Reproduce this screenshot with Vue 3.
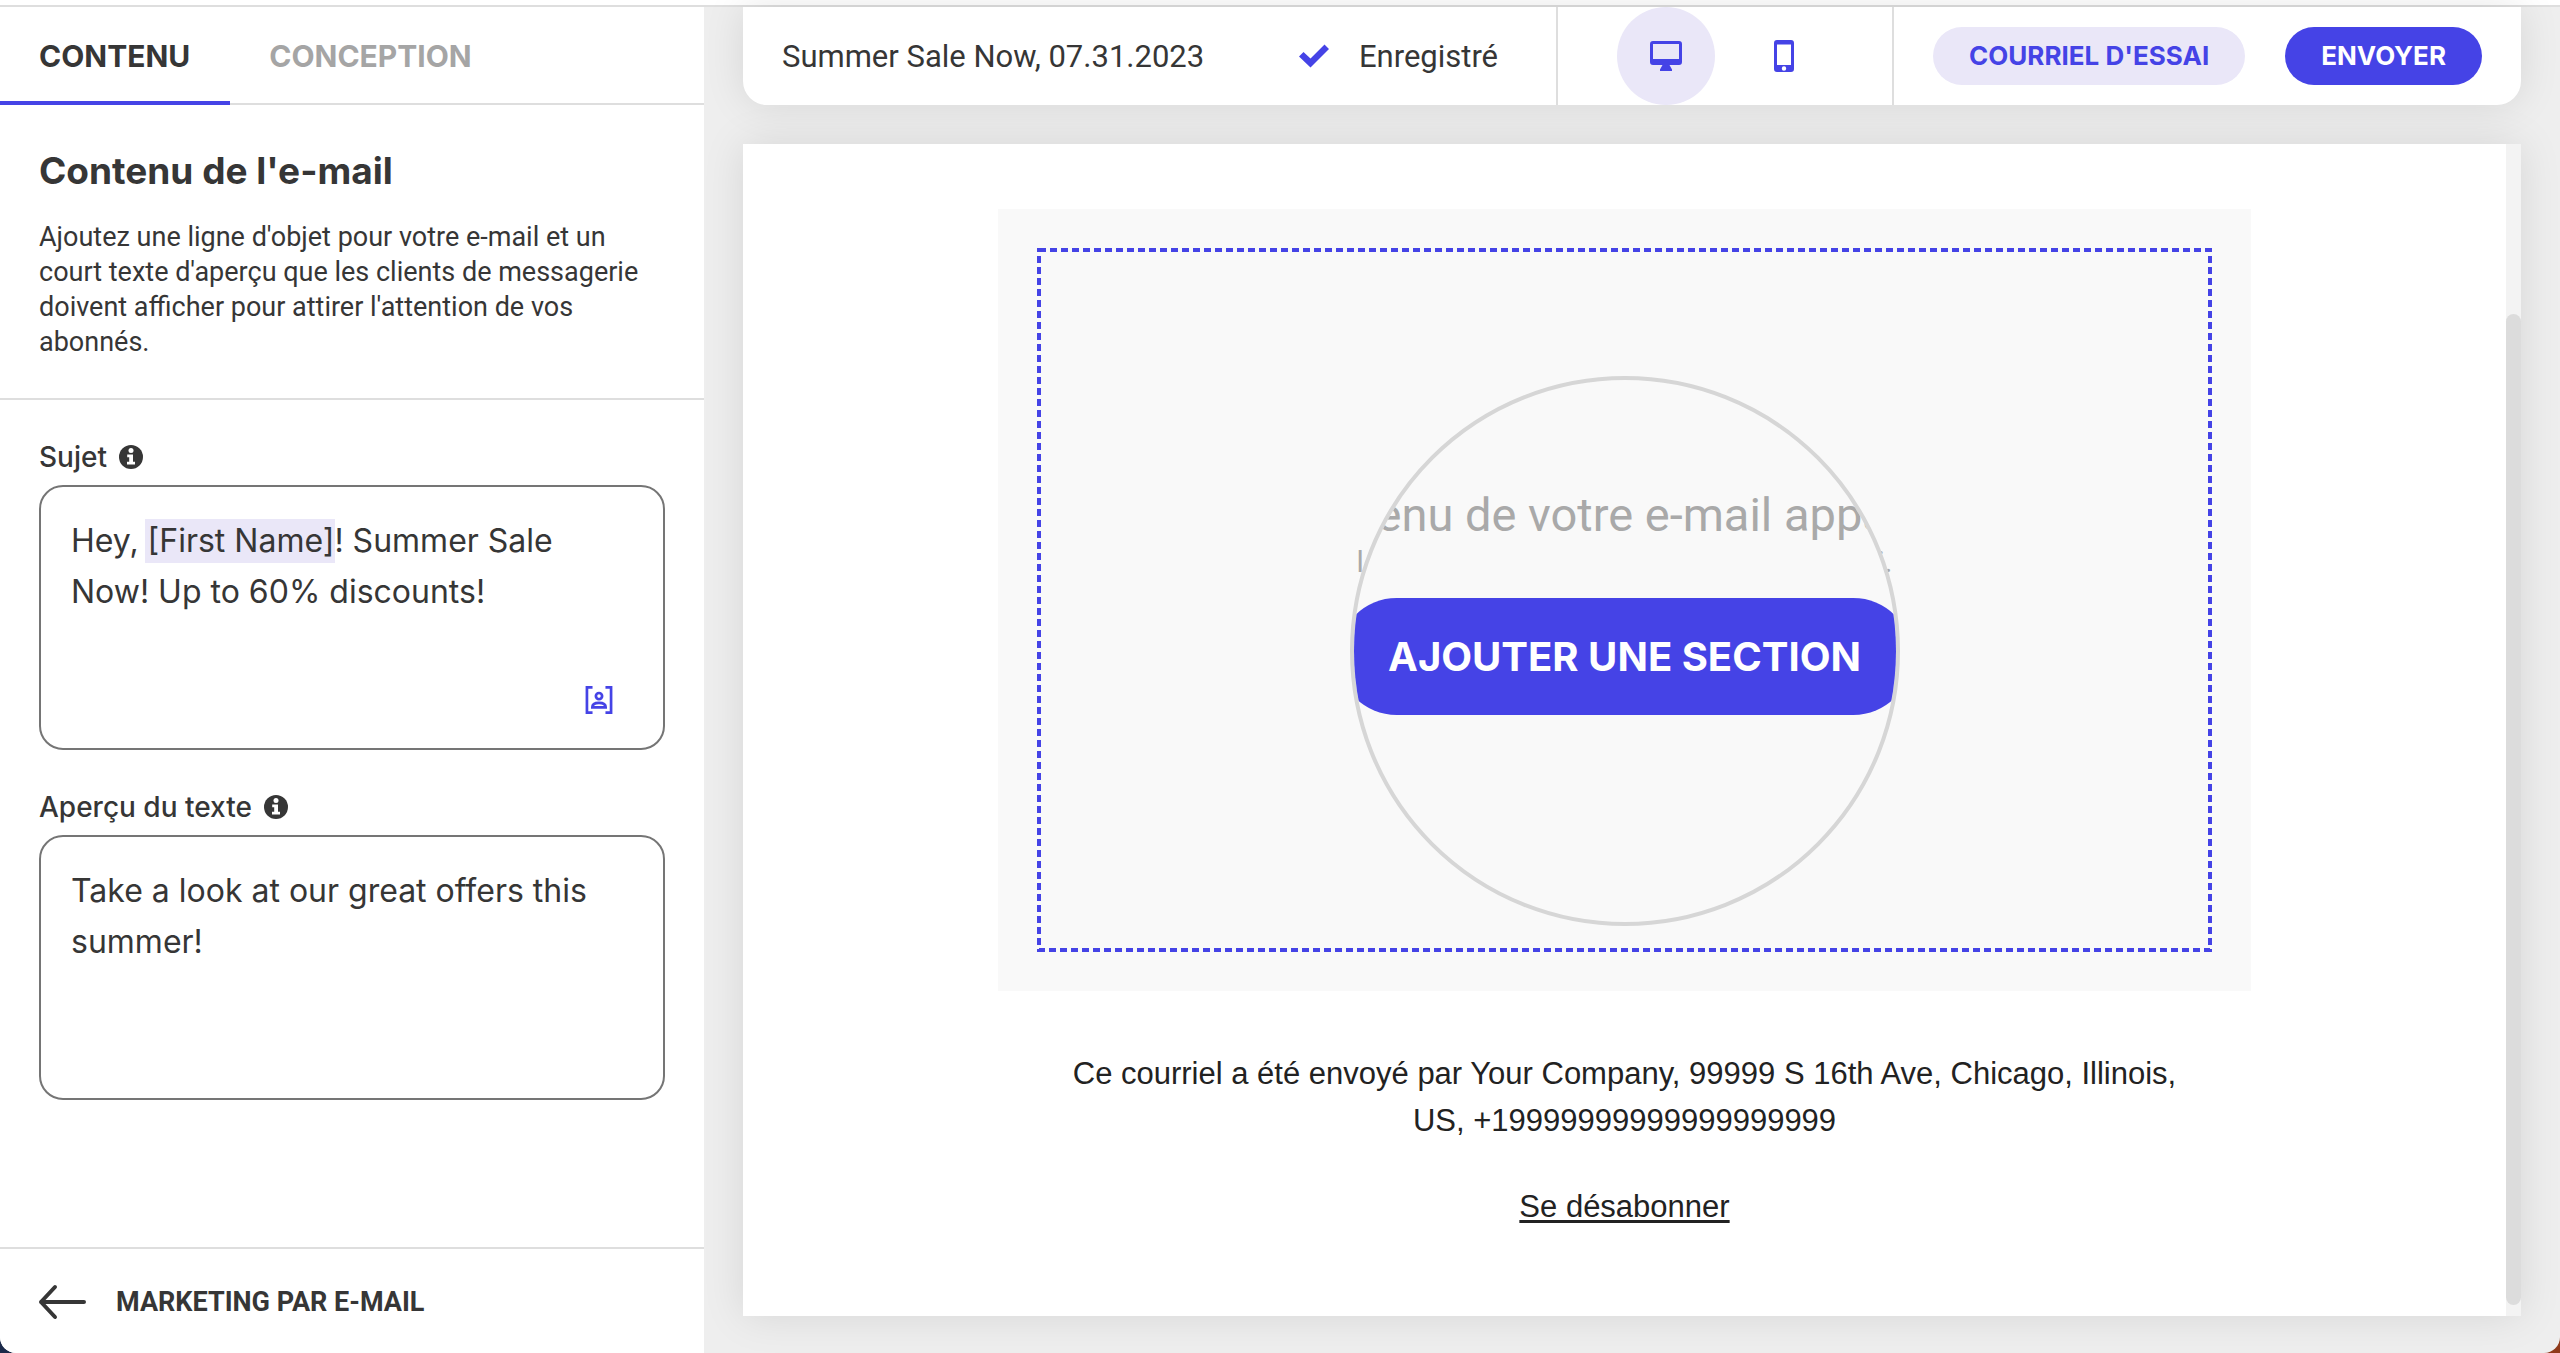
<script setup>
import { ref } from 'vue'

const subject = ref('Hey, [First Name]! Summer Sale Now! Up to 60% discounts!')
const preview = ref('Take a look at our great offers this summer!')
const device = ref('desktop')
</script>

<template>
  <div class="desk">
    <div class="window">
      <div class="browser-edge"></div>
      <div class="layout">
        <aside class="sidebar">
          <nav class="tabs">
            <button class="tab active" type="button">CONTENU</button>
            <button class="tab" type="button">CONCEPTION</button>
          </nav>

          <section class="intro">
            <h1>Contenu de l'e-mail</h1>
            <p>Ajoutez une ligne d'objet pour votre e-mail et un court texte d'aperçu que les clients de messagerie doivent afficher pour attirer l'attention de vos abonnés.</p>
          </section>

          <form class="fields" @submit.prevent>
            <div class="field">
              <label for="subject">
                Sujet
                <svg class="info" viewBox="0 0 24 24" aria-hidden="true">
                  <circle cx="12" cy="12" r="12" />
                  <circle class="cut" cx="12" cy="5.600" r="2.500" />
                  <path class="cut" d="M8.200 9.400h5.800v7.400h2v2.800H8v-2.800h2.200v-4.600h-2z" />
                </svg>
              </label>
              <div class="box">
                <textarea id="subject" class="with-token" v-model="subject" spellcheck="false"></textarea>
                <button class="personalize" type="button" aria-label="Personnaliser">
                  <svg viewBox="0 0 26 26" aria-hidden="true">
                    <path d="M7 1.300H1.800v23.400H7M19 1.300h5.200v23.400H19" />
                    <circle cx="13" cy="9.400" r="2.900" />
                    <path d="M6.800 19.800c0-2.600 2.600-4.100 6.200-4.100s6.200 1.500 6.200 4.100z" />
                  </svg>
                </button>
              </div>
            </div>
            <div class="field">
              <label for="preview">
                Aperçu du texte
                <svg class="info" viewBox="0 0 24 24" aria-hidden="true">
                  <circle cx="12" cy="12" r="12" />
                  <circle class="cut" cx="12" cy="5.600" r="2.500" />
                  <path class="cut" d="M8.200 9.400h5.800v7.400h2v2.800H8v-2.800h2.200v-4.600h-2z" />
                </svg>
              </label>
              <div class="box">
                <textarea id="preview" v-model="preview" spellcheck="false"></textarea>
              </div>
            </div>
          </form>

          <a class="back" href="#">
            <svg viewBox="0 0 48 36" aria-hidden="true">
              <path d="M46 18H3M17 3L3 18l14 15" />
            </svg>
            MARKETING PAR E-MAIL
          </a>
        </aside>

        <main class="main">
          <header class="toolbar">
            <div class="document">
              <span>Summer Sale Now, 07.31.2023</span>
              <span class="saved">
                <svg viewBox="0 0 30 24" aria-hidden="true">
                  <path d="M0 12.500l4.500-4.500 7 6.500L25.500 0.500 30 5 11.500 23.500z" />
                </svg>
                Enregistré
              </span>
            </div>
            <div class="devices">
              <button type="button" aria-label="Ordinateur" :class="{ on: device === 'desktop' }" @click="device = 'desktop'">
                <svg width="32" height="30" viewBox="0 0 32 30" aria-hidden="true">
                  <path fill-rule="evenodd" d="M3 0h26a3 3 0 0 1 3 3v18a3 3 0 0 1-3 3H19.500l2.500 4.500V30H10v-1.500l2.500-4.500H3a3 3 0 0 1-3-3V3a3 3 0 0 1 3-3zM3 3v15h26V3z" />
                </svg>
              </button>
              <button type="button" aria-label="Mobile" :class="{ on: device === 'mobile' }" @click="device = 'mobile'">
                <svg width="20" height="32" viewBox="0 0 20 32" aria-hidden="true">
                  <path fill-rule="evenodd" d="M3 0h14a3 3 0 0 1 3 3v26a3 3 0 0 1-3 3H3a3 3 0 0 1-3-3V3a3 3 0 0 1 3-3zM3 4.500V25h14V4.500zM10 26.300a2.200 2.200 0 1 0 0 4.400a2.200 2.200 0 1 0 0-4.400z" />
                </svg>
              </button>
            </div>
            <div class="actions">
              <button class="pill soft" type="button">COURRIEL D'ESSAI</button>
              <button class="pill" type="button">ENVOYER</button>
            </div>
          </header>

          <div class="canvas">
            <div class="mail">
              <div class="block">
                <div class="dropzone">
                  <svg class="dashes" aria-hidden="true"><rect width="100%" height="100%" /></svg>
                  <div class="hint"><span>l</span><span>ici.</span></div>
                  <div class="lens">
                    <p>tenu de votre e-mail appa</p>
                    <button type="button">AJOUTER UNE SECTION</button>
                  </div>
                </div>
              </div>
              <footer>
                <p>Ce courriel a été envoyé par Your Company, 99999 S 16th Ave, Chicago, Illinois, US, +19999999999999999999</p>
                <a href="#">Se désabonner</a>
              </footer>
            </div>
            <div class="track"><div class="thumb"></div></div>
          </div>
        </main>
      </div>
    </div>
  </div>
</template>

<style>
body {
  margin: 0;
}
</style>

<style scoped>
* {
  box-sizing: border-box;
}
button {
  border: 0;
  padding: 0;
  background: none;
  color: inherit;
  font: inherit;
  cursor: pointer;
}
h1,
p {
  margin: 0;
}
.desk {
  background: linear-gradient(90deg, #1b2a4a 50%, #8f3a1a 50%);
  color: #363636;
  font-family: Roboto, sans-serif;
}
.window {
  display: flex;
  flex-direction: column;
  min-height: 100vh;
  overflow: hidden;
  border-radius: 0 0 16px 16px;
  background: #eee;
}
.browser-edge {
  height: 7px;
  background: #fff;
  border-bottom: 2px solid #dedede;
}
.layout {
  display: flex;
  flex: 1;
}

/* Sidebar */
.sidebar {
  display: flex;
  flex-direction: column;
  flex: 0 0 27.5%;
  background: #fff;
}
.tabs {
  display: flex;
  height: 98px;
  border-bottom: 2px solid #dedede;
}
.tab {
  height: 98px;
  padding: 4px 40px 0 39px;
  border-bottom: 4px solid transparent;
  color: #a5a5a5;
  font: 700 30px/40px Inter, sans-serif;
}
.tab.active {
  border-color: #4543e6;
  color: #363636;
}
.intro {
  padding: 40px 39px 38px;
  border-bottom: 2px solid #dedede;
}
.intro h1 {
  margin-bottom: 23px;
  font: 700 37px/52px Inter, sans-serif;
}
.intro p {
  font-size: 27px;
  line-height: 35px;
}
.fields {
  display: flex;
  flex-direction: column;
  gap: 36px;
  flex: 1;
  padding: 36px 39px 0;
}
.field label {
  display: flex;
  align-items: center;
  gap: 12px;
  height: 49px;
  padding-bottom: 8px;
  font: 500 28px/40px Inter, sans-serif;
}
.info {
  width: 24px;
  height: 24px;
  fill: #363636;
}
.info .cut {
  fill: #fff;
}
.box {
  position: relative;
}
.box textarea {
  display: block;
  width: 100%;
  height: 265px;
  padding: 28px 30px;
  border: 2px solid #757575;
  border-radius: 24px;
  outline: 0;
  resize: none;
  overflow: hidden;
  color: #363636;
  background: #fff;
  font: 400 32px/51px Inter, sans-serif;
}
.box textarea.with-token {
  background: linear-gradient(#eae7f8, #eae7f8) 104px 32px / 190px 44px no-repeat #fff;
}
.personalize {
  position: absolute;
  right: 52px;
  bottom: 36px;
  width: 28px;
  height: 28px;
}
.personalize svg {
  display: block;
  width: 28px;
  height: 28px;
  fill: none;
  stroke: #4543e6;
  stroke-width: 2.5;
}
.back {
  display: flex;
  align-items: center;
  gap: 30px;
  height: 106px;
  padding: 2px 38px 0;
  border-top: 2px solid #dedede;
  color: #363636;
  font-size: 27px;
  font-weight: 700;
  text-decoration: none;
}
.back svg {
  width: 48px;
  height: 36px;
  fill: none;
  stroke: #363636;
  stroke-width: 4;
  stroke-linecap: round;
  stroke-linejoin: round;
}

/* Toolbar */
.main {
  display: flex;
  flex-direction: column;
  gap: 39px;
  flex: 1;
  min-width: 0;
  padding: 0 39px 37px;
}
.toolbar {
  display: flex;
  height: 98px;
  border-radius: 0 0 24px 24px;
  background: #fff;
  box-shadow: 0 0 40px rgba(0, 0, 0, 0.1);
}
.document {
  display: flex;
  align-items: center;
  justify-content: space-between;
  flex: 1;
  padding: 0 58px 0 39px;
  font-size: 31px;
}
.saved {
  display: flex;
  align-items: center;
  gap: 30px;
}
.saved svg {
  width: 30px;
  height: 24px;
  fill: #4543e6;
}
.devices {
  display: flex;
  gap: 20px;
  padding: 0 59px;
  border: solid #dedede;
  border-width: 0 2px;
}
.devices button {
  display: flex;
  align-items: center;
  justify-content: center;
  width: 98px;
  height: 98px;
  border-radius: 50%;
}
.devices .on {
  background: #eae7f8;
}
.devices svg {
  fill: #4543e6;
}
.actions {
  display: flex;
  align-items: center;
  gap: 40px;
  padding: 0 39px;
}
.pill {
  height: 58px;
  padding: 0 36px;
  border-radius: 29px;
  background: #4543e6;
  color: #fff;
  font: 700 26px/40px Inter, sans-serif;
}
.pill.soft {
  background: #eae7f8;
  color: #4543e6;
}

/* Mail preview */
.canvas {
  display: flex;
  flex: 1;
  background: #fff;
  box-shadow: 0 0 40px rgba(0, 0, 0, 0.1);
}
.mail {
  flex: 1;
  padding: 65px 255px 0;
}
.block {
  padding: 39px;
  background: #f9f9f9;
}
.dropzone {
  position: relative;
  height: 704px;
  padding-top: 128px;
}
.dashes {
  position: absolute;
  inset: 2px;
  width: calc(100% - 4px);
  height: calc(100% - 4px);
  overflow: visible;
  fill: none;
  stroke: #4543e6;
  stroke-width: 4;
  stroke-dasharray: 7 4;
}
.hint {
  position: absolute;
  top: 294px;
  left: 50%;
  display: flex;
  justify-content: space-between;
  width: 536px;
  margin-left: -268px;
  color: #a9a9a9;
  font-size: 30px;
  line-height: 40px;
}
.lens {
  position: relative;
  display: flex;
  flex-direction: column;
  align-items: center;
  width: 550px;
  height: 550px;
  margin: 0 auto;
  padding-top: 105px;
  overflow: hidden;
  border: 4px solid #d6d6d6;
  border-radius: 50%;
  background: #f9f9f9;
}
.lens p {
  margin-bottom: 53px;
  color: #a9a9a9;
  font-size: 47px;
  line-height: 60px;
  white-space: nowrap;
}
.lens button {
  flex: none;
  width: 574px;
  height: 117px;
  border-radius: 59px;
  background: #4543e6;
  color: #fff;
  font: 700 40px/60px Inter, sans-serif;
}
footer {
  padding: 59px 60px 0;
  color: #222;
  font: 31px/47px "Liberation Sans", Arial, sans-serif;
  text-align: center;
}
footer p {
  margin-bottom: 39px;
}
footer a {
  color: inherit;
  text-underline-offset: 3px;
}
.track {
  width: 15px;
  padding: 170px 0 11px;
  background: #f3f3f3;
}
.thumb {
  height: 100%;
  border-radius: 8px;
  background: #dcdcdc;
}
</style>
